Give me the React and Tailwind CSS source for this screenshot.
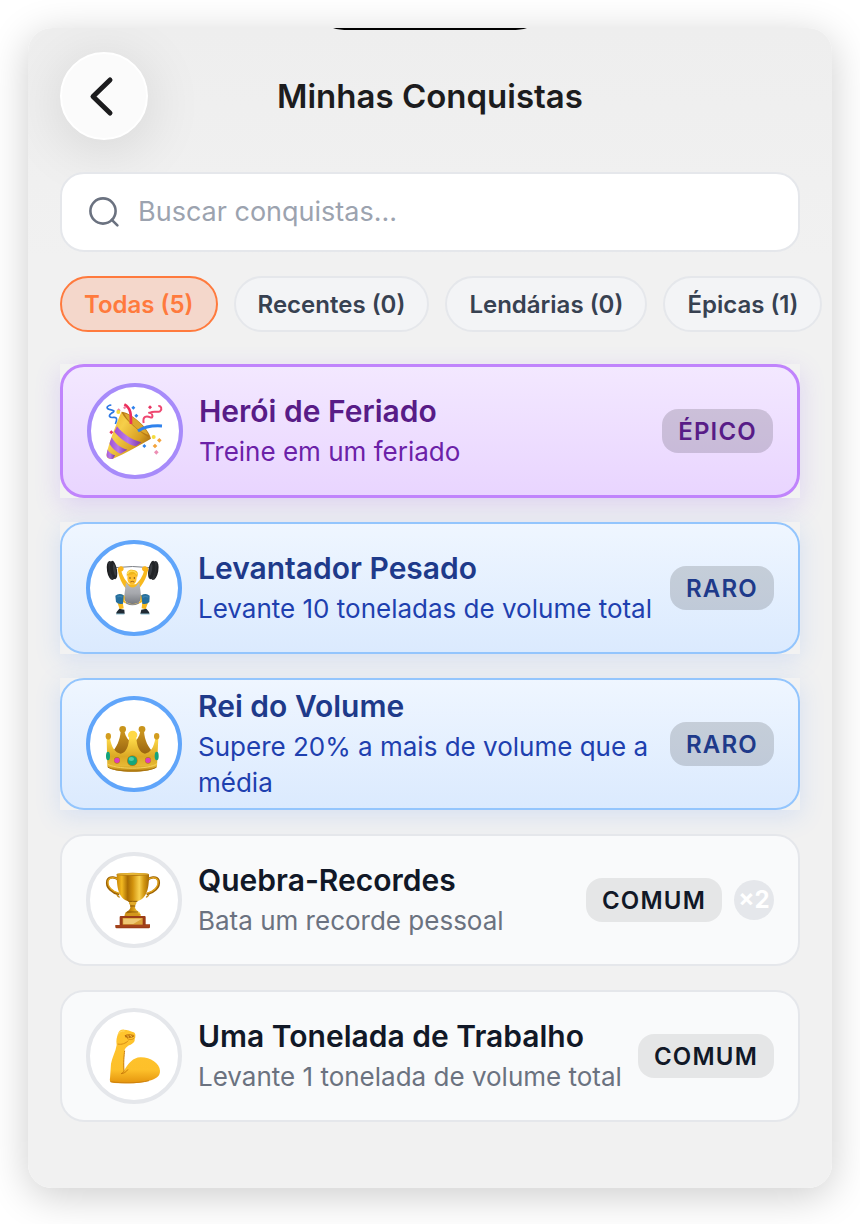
import React, { useState } from "react";

function PartyIcon() {
  return (
    <svg viewBox="81 72 168 168" className="size-14 overflow-visible" aria-hidden="true">
      <defs>
        <linearGradient id="party-gold" x1="0" y1="0" x2="1" y2="0.7">
          <stop offset="0" stopColor="#e9a91c" />
          <stop offset="0.4" stopColor="#f6cf4a" />
          <stop offset="0.75" stopColor="#d89f22" />
          <stop offset="1" stopColor="#9b6210" />
        </linearGradient>
        <linearGradient id="party-purple" x1="0" y1="0" x2="1" y2="0">
          <stop offset="0" stopColor="#a050d0" />
          <stop offset="0.5" stopColor="#b878ea" />
          <stop offset="1" stopColor="#7b35a8" />
        </linearGradient>
        <clipPath id="party-cone">
          <path d="M124 99 C112 128 88 186 79 228 C79 237 89 242 99 239 C139 222 176 200 213 179 C192 168 139 130 124 99 Z" />
        </clipPath>
      </defs>
      <path d="M124 98 C150 98 206 146 213 179 C180 176 132 140 124 98 Z" fill="#b97a16" />
      <path d="M132 103 C158 108 192 139 206 168 C181 160 148 135 132 103 Z" fill="#dca72e" />
      <g clipPath="url(#party-cone)">
        <rect x="74" y="90" width="145" height="155" fill="url(#party-gold)" />
        <path d="M111 142 C128 164 153 182 184 190 L168 202 C142 196 117 176 103 158 Z" fill="url(#party-purple)" />
        <path d="M95 175 C106 195 123 208 142 212 L122 224 C107 218 94 205 87 191 Z" fill="url(#party-purple)" />
        <path d="M82 211 C87 221 96 227 105 229 L98 242 C86 240 77 234 76 225 Z" fill="url(#party-purple)" />
      </g>
      <path d="M133 76 C154 87 153 109 153 135" fill="none" stroke="#ec2f5b" strokeWidth="8" />
      <path d="M174 156 C194 143 217 139 246 141" fill="none" stroke="#2f82ec" strokeWidth="9" />
      <path d="M94 78 C80 80 77 88 88 91 C103 94 107 96 94 103 C84 110 88 117 101 115 C112 114 112 122 106 135" fill="none" stroke="#2c78e4" strokeWidth="5" />
      <path d="M191 132 C187 111 200 110 211 115 C222 120 218 97 205 102 M211 101 C220 95 232 101 240 97 C248 90 243 80 235 81" fill="none" stroke="#ee4770" strokeWidth="6" />
      <path d="M116 88 l6 6 -6 6 -6 -6z" fill="#ee80a5" />
      <g fill="#2f82ec">
        <path d="M160 80 l6 6 -6 6 -6 -6zM169 104 l6 6 -6 6 -6 -6zM193 195 l6 6 -6 6 -6 -6z" />
      </g>
      <g fill="#e73462">
        <path d="M210 79 l6 6 -6 6 -6 -6zM94 154 l6 6 -6 6 -6 -6z" />
      </g>
      <g fill="#f5dc3c"><circle cx="115" cy="99" r="6" /><circle cx="221" cy="174" r="6" /></g>
      <g fill="#f3a43d"><path d="M238 177 l7 7 -7 7 -7 -7zM225 194 l7 7 -7 7 -7 -7z" /></g>
      <path d="M229 213 l7 7 -7 7 -7 -7z" fill="#ed8eb4" />
      <path d="M134 81 l5 5 -5 5 -5 -5z" fill="#f184a9" />
    </svg>
  );
}

function LifterIcon() {
  return (
    <svg viewBox="78 78 168 168" className="size-14 overflow-visible" aria-hidden="true">
      <defs>
        <linearGradient id="lifter-suit" x1="0" y1="0" x2="0" y2="1">
          <stop offset="0" stopColor="#b9bbc0" />
          <stop offset="0.5" stopColor="#a6a8ad" />
          <stop offset="1" stopColor="#777a80" />
        </linearGradient>
        <linearGradient id="lifter-plate" x1="0" y1="0" x2="1" y2="0">
          <stop offset="0" stopColor="#17181a" />
          <stop offset="0.5" stopColor="#303337" />
          <stop offset="1" stopColor="#17181a" />
        </linearGradient>
      </defs>
      <path d="M104 101 Q157 94 212 101" fill="none" stroke="#7d8187" strokeWidth="3" />
      <g transform="rotate(-10 96 109)">
        <ellipse cx="93" cy="109" rx="12" ry="29" fill="url(#lifter-plate)" />
        <ellipse cx="101" cy="109" rx="10" ry="28" fill="#222427" />
        <ellipse cx="104" cy="109" rx="4" ry="18" fill="#3a3d41" />
      </g>
      <g transform="rotate(10 220 109)">
        <ellipse cx="223" cy="109" rx="12" ry="29" fill="url(#lifter-plate)" />
        <ellipse cx="215" cy="109" rx="10" ry="28" fill="#222427" />
        <ellipse cx="212" cy="109" rx="4" ry="18" fill="#3a3d41" />
      </g>
      <path d="M114 109 L124 111 C128 127 138 143 148 151 H167 C178 143 188 127 192 111 L203 110 C200 132 188 150 177 164 L175 178 H139 L138 164 C126 150 116 129 114 109 Z" fill="#f8b91e" />
      <path d="M119 98 c7-3 12 1 12 7 c0 5-5 8-12 8 c-7 0-9-11 0-15z M199 98 c-7-3-13 1-13 7 c0 5 5 8 12 8 c9 0 10-11 1-15z" fill="#fbb51a" />
      <path d="M138 145 L148 157 Q157 164 168 157 L178 145 L184 192 C180 216 136 216 132 192 Z" fill="url(#lifter-suit)" />
      <path d="M134 185 C119 177 108 182 109 196 L119 226 L131 223 L128 204 C140 210 150 212 157 212 C167 212 180 209 187 204 L185 223 L197 226 L208 195 C208 181 195 178 182 185 L181 200 C174 213 141 213 134 200 Z" fill="#f8b91e" />
      <path d="M134 187 L142 206 Q157 216 174 206 L181 187 L176 209 Q157 218 139 209 Z" fill="#85888e" />
      <path d="M106 185 Q117 176 131 184 L129 209 Q116 213 108 204 Z M209 185 Q198 176 184 184 L187 209 Q200 213 208 204 Z" fill="#266f9e" />
      <path d="M112 189 Q121 184 127 190 M188 190 Q197 184 205 190" fill="none" stroke="#3a82ae" strokeWidth="4" />
      <ellipse cx="156" cy="132" rx="14" ry="20" fill="#ffbf2c" />
      <path d="M141 129 C137 112 148 105 159 108 C174 109 176 118 171 131 C167 125 166 120 162 119 C154 123 147 121 144 122 Z" fill="#efb51b" />
      <path d="M142 120 C147 108 166 108 170 121" fill="none" stroke="#ffdc57" strokeWidth="4" />
      <circle cx="150" cy="132" r="2" fill="#503218" /><circle cx="163" cy="132" r="2" fill="#503218" />
      <path d="M151 144 Q157 140 163 144" fill="none" stroke="#91531b" strokeWidth="2.5" />
      <path d="M118 224 L133 227 L134 239 H109 C108 232 114 230 118 224 Z M199 224 L184 227 L181 239 H208 C209 232 203 230 199 224 Z" fill="#202a34" />
      <path d="M108 240 H133 M182 240 H209" stroke="#55a2bb" strokeWidth="2" />
    </svg>
  );
}

function CrownIcon() {
  return (
    <svg viewBox="78 78 168 168" className="size-14 overflow-visible" aria-hidden="true">
      <defs>
        <linearGradient id="crown-gold" x1="0" y1="0" x2="0" y2="1">
          <stop offset="0" stopColor="#ffdc4a" />
          <stop offset="0.55" stopColor="#dba824" />
          <stop offset="0.82" stopColor="#e6b934" />
          <stop offset="1" stopColor="#b37b0c" />
        </linearGradient>
        <linearGradient id="crown-back" x1="0" y1="0" x2="0" y2="1">
          <stop offset="0" stopColor="#cb951f" />
          <stop offset="1" stopColor="#96620f" />
        </linearGradient>
      </defs>
      <path d="M122 124 L133 124 C137 141 145 152 158 160 L148 196 L94 190 C110 172 120 151 122 124 Z" fill="url(#crown-back)" />
      <path d="M181 124 L192 124 C194 151 204 172 222 190 L168 196 L157 160 C170 152 178 141 181 124 Z" fill="url(#crown-back)" />
      <circle cx="128" cy="118" r="10" fill="#c8941b" /><circle cx="186" cy="118" r="10" fill="#c8941b" />
      <path d="M80 145 L90 145 C94 172 106 189 122 191 C139 188 147 166 147 143 H169 C170 166 178 188 195 191 C211 189 222 172 226 145 H235 L231 229 C218 251 96 251 82 229 Z" fill="url(#crown-gold)" />
      <ellipse cx="85" cy="139" rx="8" ry="10" fill="#d39d1f" /><ellipse cx="230" cy="139" rx="8" ry="10" fill="#d39d1f" />
      <ellipse cx="158" cy="135" rx="14" ry="13" fill="#ffd947" />
      <path d="M82 221 C101 239 212 239 231 221" fill="none" stroke="#f7d35a" strokeWidth="3" />
      <path d="M83 231 C105 247 208 247 230 231" fill="none" stroke="#a87310" strokeWidth="3" />
      <ellipse cx="84" cy="198" rx="6" ry="13" fill="#13a37b" /><ellipse cx="230" cy="198" rx="6" ry="13" fill="#13a37b" />
      <ellipse cx="157" cy="212" rx="16" ry="16" fill="#b57b12" /><circle cx="157" cy="212" r="14" fill="#15a67b" />
      <ellipse cx="154" cy="207" rx="8" ry="6" fill="#4fcda6" />
      <ellipse cx="111" cy="211" rx="9" ry="10" fill="#b57b12" /><ellipse cx="111" cy="211" rx="8" ry="8" fill="#dd3ebd" />
      <ellipse cx="204" cy="211" rx="9" ry="10" fill="#b57b12" /><ellipse cx="204" cy="211" rx="8" ry="8" fill="#dd3ebd" />
    </svg>
  );
}

function TrophyIcon() {
  return (
    <svg viewBox="78 72 168 168" className="size-14 overflow-visible" aria-hidden="true">
      <defs>
        <linearGradient id="trophy-gold" x1="0" y1="0" x2="1" y2="0">
          <stop offset="0" stopColor="#c98706" />
          <stop offset="0.16" stopColor="#f3ba20" />
          <stop offset="0.34" stopColor="#a96c03" />
          <stop offset="0.5" stopColor="#d2930d" />
          <stop offset="0.7" stopColor="#f9d24f" />
          <stop offset="0.84" stopColor="#d39812" />
          <stop offset="1" stopColor="#a66b05" />
        </linearGradient>
      </defs>
      <path d="M119 100 C110 86 87 83 82 98 C77 118 96 134 118 139 M199 100 C208 86 231 83 236 98 C241 118 220 134 200 139" fill="none" stroke="#9c6205" strokeWidth="7" />
      <path d="M119 98 C109 87 89 85 84 98 C81 116 98 132 118 136 M199 98 C209 87 229 85 234 98 C237 116 220 132 200 136" fill="none" stroke="#e2a51b" strokeWidth="4" />
      <path d="M110 139 q4 9 9 8 M207 139 q-4 9 -9 8" fill="none" stroke="#c28b17" strokeWidth="4" />
      <path d="M110 79 H207 C207 116 204 151 170 161 L165 174 C164 184 172 189 179 193 L183 205 H133 L137 193 C146 188 152 184 151 174 L147 161 C113 151 111 116 110 79 Z" fill="url(#trophy-gold)" />
      <ellipse cx="158" cy="79" rx="49" ry="5" fill="#b57b12" />
      <ellipse cx="158" cy="78" rx="47" ry="3" fill="#e5b535" />
      <path d="M145 160 H172 M150 174 H166 M142 192 H174" stroke="#8d5b08" strokeWidth="3" />
      <ellipse cx="158" cy="166" rx="11" ry="5" fill="#e2aa29" />
      <ellipse cx="158" cy="200" rx="24" ry="6" fill="#d3971b" />
      <path d="M122 204 H194 Q197 204 197 208 V229 H210 V237 Q210 241 206 241 H110 Q106 241 106 237 V231 H119 V208 Q119 204 122 204 Z" fill="#9b3c17" />
      <path d="M107 234 H209" stroke="#b95326" strokeWidth="2" />
      <path d="M128 210 H188 V230 H128 Z" fill="#dba33a" />
      <path d="M130 212 H186 L160 228 H130 Z" fill="#efc874" />
    </svg>
  );
}

function ArmIcon() {
  return (
    <svg viewBox="78 75 168 168" className="size-14 overflow-visible" aria-hidden="true">
      <defs>
        <linearGradient id="arm-skin" x1="0" y1="0" x2="0" y2="1">
          <stop offset="0" stopColor="#ffc52e" />
          <stop offset="0.75" stopColor="#fdc02a" />
          <stop offset="1" stopColor="#e4940d" />
        </linearGradient>
      </defs>
      <path d="M114 92 C116 84 124 79 132 80 C142 80 151 84 161 88 C168 92 167 101 164 108 C166 116 157 124 147 127 C140 132 134 136 133 144 C132 163 131 182 132 203 C146 180 159 164 181 163 C210 162 239 181 240 203 C241 221 224 229 207 233 C178 243 141 241 103 240 C92 240 88 235 90 226 L93 182 C96 164 107 146 110 126 C108 112 110 103 114 92 Z" fill="url(#arm-skin)" />
      <path d="M132 203 C130 181 132 157 134 143 M132 203 C131 208 127 211 123 212 C130 212 139 207 144 199" fill="none" stroke="#c97d0b" strokeWidth="3" />
      <path d="M91 236 C126 241 174 241 207 233" fill="none" stroke="#cf820d" strokeWidth="3" />
      <path d="M134 97 C144 91 158 93 164 99 C158 105 145 106 136 103 Z" fill="#b96e10" />
      <path d="M138 97 H161 M141 106 C150 112 159 110 164 104 M113 123 C125 126 137 121 145 113" fill="none" stroke="#d88d13" strokeWidth="3" />
      <path d="M142 99 L147 103 M151 97 L155 102" stroke="#ffd04a" strokeWidth="3" />
      <path d="M115 94 C118 86 126 83 134 84" fill="none" stroke="#ffdc66" strokeWidth="3" />
    </svg>
  );
}

const tiers = {
  epic: {
    wrap: "bg-[#f2f2f2] shadow-[0_8px_24px_rgba(139,92,246,0.2)]",
    card: "min-h-[134px] border-3 border-[#c084fc] bg-linear-to-b from-[#f3e8ff] to-[#e9d5ff]",
    ring: "border-[#a78bfa]",
    title: "text-[#581c87]",
    text: "text-[#6b21a8]",
    badge: "bg-black/15 text-[#581c87]",
  },
  rare: {
    wrap: "bg-[#f2f2f2] shadow-[0_6px_24px_rgba(59,130,246,0.15)]",
    card: "min-h-[132px] border-2 border-[#93c5fd] bg-linear-to-b from-[#eff6ff] to-[#dbeafe]",
    ring: "border-[#60a5fa]",
    title: "text-[#1e3a8a]",
    text: "text-[#1e40af]",
    badge: "bg-black/15 text-[#1e3a8a]",
  },
  common: {
    wrap: "",
    card: "min-h-[132px] border-2 border-[#e5e7eb] bg-[#f9fafb]",
    ring: "border-[#e5e7eb]",
    title: "text-[#111827]",
    text: "text-[#6b7280]",
    badge: "bg-black/8 text-[#111827]",
  },
};

const achievements = [
  { title: "Herói de Feriado", text: "Treine em um feriado", tier: "epic", label: "ÉPICO", Icon: PartyIcon },
  { title: "Levantador Pesado", text: "Levante 10 toneladas de volume total", tier: "rare", label: "RARO", Icon: LifterIcon },
  { title: "Rei do Volume", text: "Supere 20% a mais de volume que a média", tier: "rare", label: "RARO", Icon: CrownIcon },
  { title: "Quebra-Recordes", text: "Bata um recorde pessoal", tier: "common", label: "COMUM", count: "×2", Icon: TrophyIcon },
  { title: "Uma Tonelada de Trabalho", text: "Levante 1 tonelada de volume total", tier: "common", label: "COMUM", Icon: ArmIcon },
];

const filters = ["Todas (5)", "Recentes (0)", "Lendárias (0)", "Épicas (1)"];

function AchievementCard({ item }) {
  const tier = tiers[item.tier];
  return (
    <li className={tier.wrap}>
      <article className={`flex items-center rounded-3xl px-6 py-[7px] ${tier.card}`}>
        <div className={`flex size-24 shrink-0 items-center justify-center rounded-full border-4 bg-white ${tier.ring}`}>
          <item.Icon />
        </div>
        <div className="ml-4 min-w-0 flex-1">
          <h2 className={`text-[30px] leading-[38px] font-semibold ${tier.title}`}>{item.title}</h2>
          <p className={`mt-1 text-[26px] leading-9 ${tier.text}`}>{item.text}</p>
        </div>
        <span className={`ml-3 shrink-0 rounded-2xl px-4 pt-1.5 pb-1 text-[24px] leading-[34px] font-semibold tracking-wider ${tier.badge}`}>
          {item.label}
        </span>
        {item.count && (
          <span className="ml-3 flex size-10 shrink-0 items-center justify-center rounded-full bg-[#e5e7eb] text-[24px] font-bold text-white">
            {item.count}
          </span>
        )}
      </article>
    </li>
  );
}

export default function App() {
  const [active, setActive] = useState(filters[0]);
  return (
    <div className="flex min-h-screen flex-col bg-white px-7 pt-7 pb-9 font-['Inter','Liberation_Sans',sans-serif]">
      <main className="relative flex grow flex-col overflow-hidden rounded-3xl bg-linear-to-b from-[#eeeeee] to-[#f1f1f1] to-20% px-8 pt-6 pb-16 shadow-[0_8px_40px_rgba(0,0,0,0.2)]">
        <svg className="absolute top-0 left-1/2 h-0.5 w-[194px] -translate-x-1/2" viewBox="0 0 194 2" aria-hidden="true">
          <path d="M0 0 H194 Q188 2 178 2 H16 Q6 2 0 0 Z" fill="#000" />
        </svg>
        <header className="grid grid-cols-[88px_1fr_88px] items-center">
          <button
            type="button"
            aria-label="Voltar"
            className="flex size-22 items-center justify-center rounded-full border-2 border-white bg-[#fbfbfb] shadow-[0_8px_60px_rgba(0,0,0,0.12)]"
          >
            <svg viewBox="0 0 88 88" className="size-22 shrink-0" fill="none" stroke="#1c1c1e" strokeWidth="5" strokeLinecap="round" strokeLinejoin="round" aria-hidden="true">
              <path d="M50 28 L33 44.5 L50 61" />
            </svg>
          </button>
          <h1 className="text-center text-[33px] leading-10 font-semibold text-[#1c1c1e]">Minhas Conquistas</h1>
        </header>

        <label className="mt-8 flex h-20 shrink-0 items-center rounded-3xl border-2 border-[#e5e7eb] bg-white px-6">
          <svg viewBox="0 0 36 36" className="size-9 shrink-0" fill="none" stroke="#6b7280" strokeWidth="2.6" strokeLinecap="round" aria-hidden="true">
            <circle cx="17" cy="17" r="12.6" />
            <path d="M25.8 25.8 L31.4 31.4" />
          </svg>
          <input
            type="search"
            aria-label="Buscar conquistas"
            placeholder="Buscar conquistas..."
            className="ml-4 min-w-0 flex-1 bg-transparent text-[27px] leading-9 text-[#111827] outline-none placeholder:text-[#9ca3af]"
          />
        </label>

        <nav aria-label="Filtros" className="-mr-8 mt-6 flex shrink-0 gap-4 overflow-hidden">
          {filters.map((name) => (
            <button
              key={name}
              type="button"
              aria-pressed={active === name}
              onClick={() => setActive(name)}
              className={`h-14 shrink-0 rounded-full border-2 px-[22px] pt-0.5 text-[24px] leading-8 font-semibold whitespace-nowrap ${
                active === name
                  ? "border-[#ff7a3d] bg-[#f4d7cb] text-[#ff7a3d]"
                  : "border-[#e5e7eb] bg-[#f3f4f6] text-[#374151]"
              }`}
            >
              {name}
            </button>
          ))}
        </nav>

        <ul className="mt-8 flex flex-col gap-6">
          {achievements.map((item) => (
            <AchievementCard key={item.title} item={item} />
          ))}
        </ul>
      </main>
    </div>
  );
}
